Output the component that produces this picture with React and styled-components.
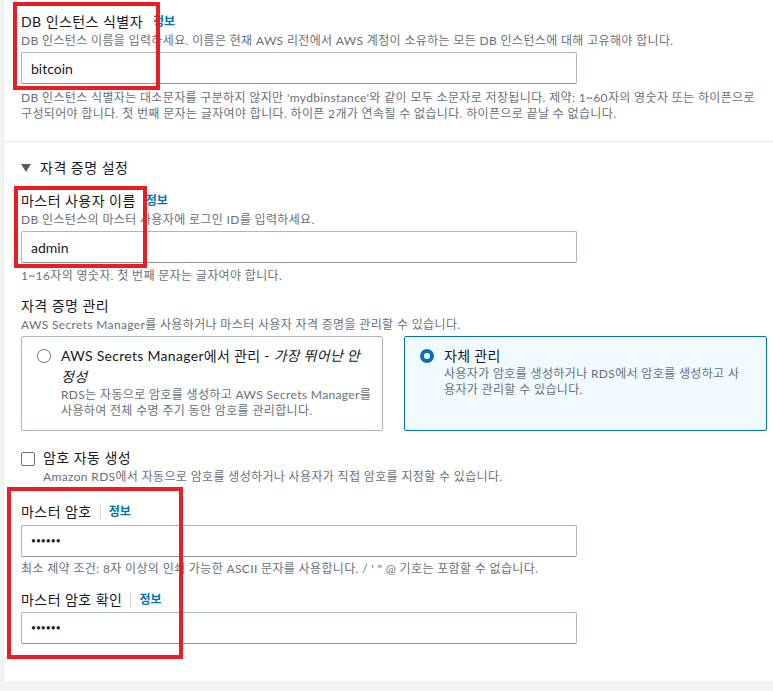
import React from 'react';
import styled, { createGlobalStyle } from 'styled-components';

const GlobalStyle = createGlobalStyle`
  * { box-sizing: border-box; }
  body {
    margin: 0;
    background: #f2f3f3;
    font-family: Lato, "Noto Sans CJK KR", sans-serif;
    color: #16191f;
  }
`;

const Field = ({ label, info, desc, children, hint, $top, $hintTop }) => (
  <FieldBox $top={$top}>
    <LabelRow>
      <LabelText>{label}</LabelText>
      {info && <Info $divider={info === 'divider'}>정보</Info>}
    </LabelRow>
    {desc && <Desc>{desc}</Desc>}
    {children}
    {hint && <Hint $top={$hintTop}>{hint}</Hint>}
  </FieldBox>
);

const App = () => {
  return (
    <Page>
      <GlobalStyle />
      <Panel>
        <Section $pad="11px 17px 19px" $border>
          <Field
            label="DB 인스턴스 식별자"
            info="plain"
            $hintTop={6}
            desc="DB 인스턴스 이름을 입력하세요. 이름은 현재 AWS 리전에서 AWS 계정이 소유하는 모든 DB 인스턴스에 대해 고유해야 합니다."
            hint={
              <>
                DB 인스턴스 식별자는 대소문자를 구분하지 않지만 'mydbinstance'와 같이 모두 소문자로 저장됩니다. 제약: 1~60자의 영숫자 또는 하이픈으로
                <br />
                구성되어야 합니다. 첫 번째 문자는 글자여야 합니다. 하이픈 2개가 연속될 수 없습니다. 하이픈으로 끝날 수 없습니다.
              </>
            }
          >
            <Input $top={3} defaultValue="bitcoin" readOnly />
          </Field>
        </Section>

        <Section $pad="15px 17px 37px">
          <Heading>
            <svg width="10" height="8" viewBox="0 0 10 8">
              <path d="M0 0 H10 L5 8 Z" fill="#545b64" />
            </svg>
            자격 증명 설정
          </Heading>

          <Field
            $top={11}
            $hintTop={5}
            label="마스터 사용자 이름"
            info="plain"
            desc="DB 인스턴스의 마스터 사용자에 로그인 ID를 입력하세요."
            hint="1~16자의 영숫자. 첫 번째 문자는 글자여야 합니다."
          >
            <Input $top={3} defaultValue="admin" readOnly />
          </Field>

          <Field
            $top={11}
            label="자격 증명 관리"
            desc="AWS Secrets Manager를 사용하거나 마스터 사용자 자격 증명을 관리할 수 있습니다."
          >
            <Tiles>
              <Tile>
                <Radio />
                <TileBody>
                  <TileTitle>
                    AWS Secrets Manager에서 관리 - <em>가장 뛰어난 안정성</em>
                  </TileTitle>
                  <TileDesc>
                    RDS는 자동으로 암호를 생성하고 AWS Secrets Manager를 사용하여 전체 수명 주기 동안 암호를 관리합니다.
                  </TileDesc>
                </TileBody>
              </Tile>
              <Tile $selected>
                <Radio $checked />
                <TileBody>
                  <TileTitle>자체 관리</TileTitle>
                  <TileDesc>
                    사용자가 암호를 생성하거나 RDS에서 암호를 생성하고 사용자가 관리할 수 있습니다.
                  </TileDesc>
                </TileBody>
              </Tile>
            </Tiles>
          </Field>

          <CheckRow>
            <CheckBox />
            <div>
              <LabelText>암호 자동 생성</LabelText>
              <Desc>Amazon RDS에서 자동으로 암호를 생성하거나 사용자가 직접 암호를 지정할 수 있습니다.</Desc>
            </div>
          </CheckRow>

          <Field
            $top={16}
            $hintTop={4}
            label="마스터 암호"
            info="divider"
            hint={`최소 제약 조건: 8자 이상의 인쇄 가능한 ASCII 문자를 사용합니다. / ' " @ 기호는 포함할 수 없습니다.`}
          >
            <Input $top={2} $secret type="password" defaultValue="123456" readOnly />
          </Field>

          <Field $top={12} label="마스터 암호 확인" info="divider">
            <Input $top={1} $secret type="password" defaultValue="123456" readOnly />
          </Field>
        </Section>
      </Panel>

      <Marker $left={13} $top={2} $w={147} $h={88} />
      <Marker $left={14} $top={186} $w={133} $h={82} />
      <Marker $left={7} $top={487} $w={176} $h={172} />
    </Page>
  );
};

export default App;

const Page = styled.div`
  position: relative;
  padding: 0 0 8px 3px;
  min-height: 691px;
  overflow: hidden;
`;

const Panel = styled.main`
  background: #fff;
  border-left: 1px solid #eaeded;
`;

const Section = styled.section`
  padding: ${(p) => p.$pad};
  border-bottom: ${(p) => (p.$border ? '1px solid #eaeded' : 'none')};
`;

const FieldBox = styled.div`
  margin-top: ${(p) => p.$top || 0}px;
`;

const LabelRow = styled.div`
  display: flex;
  align-items: center;
  height: 22px;
`;

const LabelText = styled.span`
  font-size: 14px;
  line-height: 22px;
  color: #16191f;
  letter-spacing: 0.45px;
`;

const Info = styled.span`
  font-size: 12px;
  font-weight: 700;
  line-height: 16px;
  color: #0073bb;
  margin-left: ${(p) => (p.$divider ? 8 : 10)}px;
  padding-left: ${(p) => (p.$divider ? 8 : 0)}px;
  border-left: ${(p) => (p.$divider ? '1px solid #d5dbdb' : 'none')};
`;

const Desc = styled.div`
  font-size: 12px;
  line-height: 16px;
  color: #687078;
  letter-spacing: 0.35px;
`;

const Hint = styled(Desc)`
  margin-top: ${(p) => p.$top ?? 3}px;
`;

const Input = styled.input`
  display: block;
  width: 556px;
  height: 32px;
  margin-top: ${(p) => p.$top}px;
  padding: 0 9px;
  border: 1px solid #aab7b8;
  border-bottom-color: #8d9596;
  border-radius: 2px;
  font-family: Lato, "Noto Sans CJK KR", sans-serif;
  font-size: ${(p) => (p.$secret ? '8.5px' : '14px')};
  color: #16191f;
  background: #fff;
  outline: none;
`;

const Heading = styled.div`
  display: flex;
  align-items: center;
  gap: 9px;
  font-size: 14px;
  line-height: 22px;
  letter-spacing: 0.5px;
`;

const Tiles = styled.div`
  display: grid;
  grid-template-columns: 362px 363px;
  gap: 21px;
  margin-top: 3px;
`;

const Tile = styled.div`
  display: flex;
  align-items: flex-start;
  gap: 10px;
  min-height: 95px;
  padding: 8px ${(p) => (p.$selected ? 20 : 10)}px 8px 15px;
  border: 1px solid ${(p) => (p.$selected ? '#0073bb' : '#aab7b8')};
  border-radius: 2px;
  background: ${(p) => (p.$selected ? '#f1faff' : '#fff')};
`;

const Radio = styled.span`
  flex: none;
  width: 14px;
  height: 14px;
  margin-top: 4px;
  border-radius: 50%;
  background: #fff;
  border: ${(p) => (p.$checked ? '4.5px solid #0073bb' : '1.5px solid #687078')};
`;

const TileBody = styled.div`
  flex: 1;
`;

const TileTitle = styled.div`
  font-size: 14px;
  line-height: 21px;
  letter-spacing: 0.3px;

  em {
    font-style: italic;
  }
`;

const TileDesc = styled(Desc)``;

const CheckRow = styled.div`
  display: flex;
  align-items: flex-start;
  gap: 8px;
  margin-top: 16px;
`;

const CheckBox = styled.span`
  flex: none;
  width: 14px;
  height: 14px;
  margin-top: 5px;
  border: 1.5px solid #687078;
  border-radius: 2px;
  background: #fff;
`;

const Marker = styled.div`
  position: absolute;
  left: ${(p) => p.$left}px;
  top: ${(p) => p.$top}px;
  width: ${(p) => p.$w}px;
  height: ${(p) => p.$h}px;
  border: 4px solid #ea1c24;
  pointer-events: none;
`;
